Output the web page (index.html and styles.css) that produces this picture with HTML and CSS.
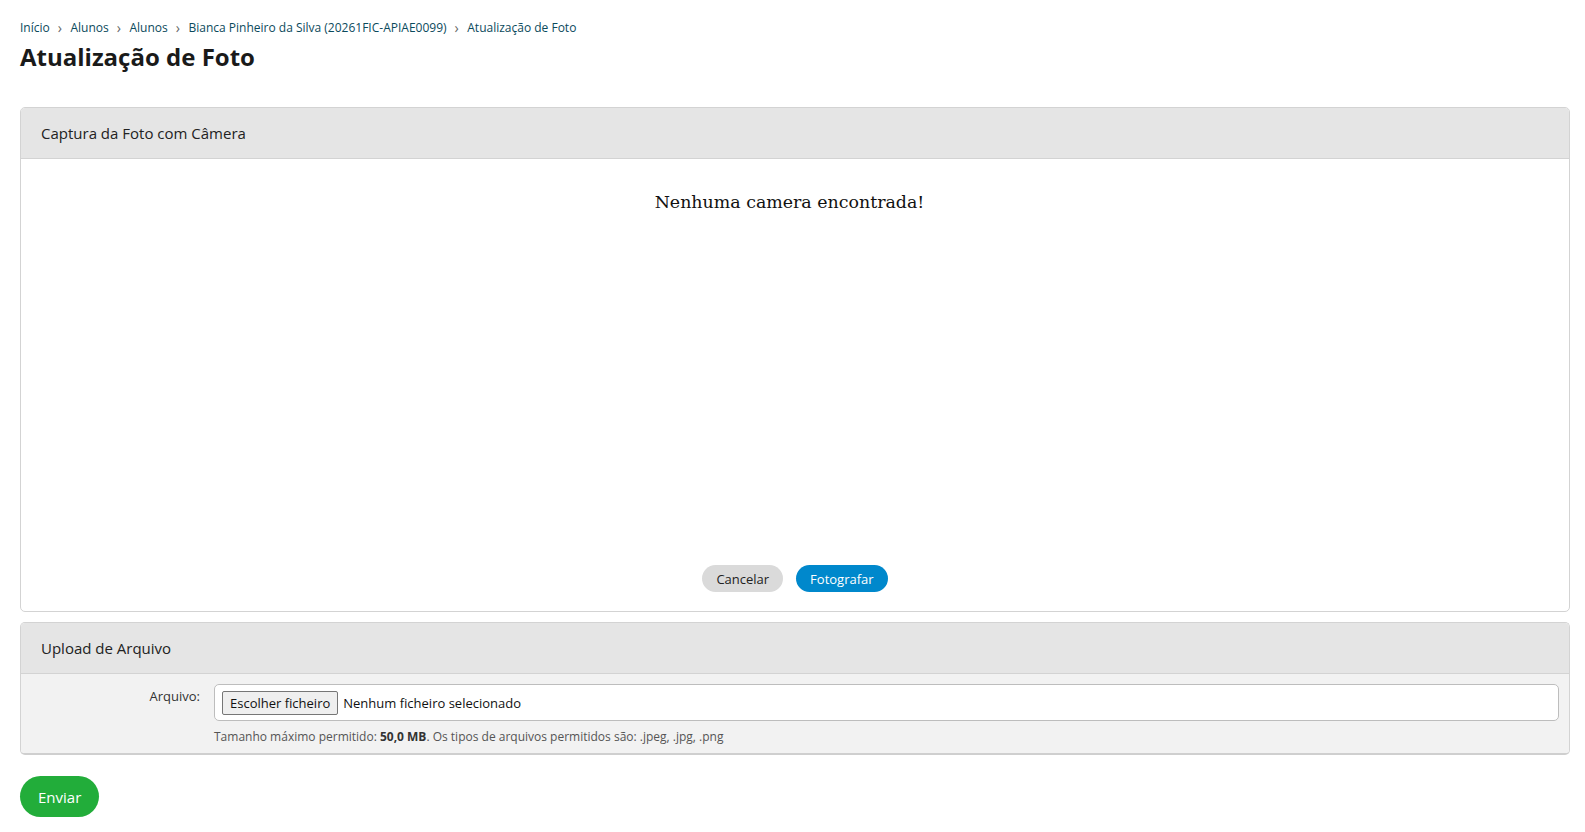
FILE: index.html
```html
<!DOCTYPE html>
<html lang="pt">
<head>
  <meta charset="UTF-8" />
  <title>Atualização de Foto</title>
  <link rel="stylesheet" href="styles.css">
</head>
<body>
  <div class="page">
    <nav class="breadcrumb">
      <a href="#">Início</a><span class="sep">&#8250;</span>
      <a href="#">Alunos</a><span class="sep">&#8250;</span>
      <a href="#">Alunos</a><span class="sep">&#8250;</span>
      <a href="#">Bianca Pinheiro da Silva (20261FIC-APIAE0099)</a><span class="sep">&#8250;</span>
      <span class="current">Atualização de Foto</span>
    </nav>
    <h1>Atualização de Foto</h1>

    <!-- Camera -->
    <div class="box">
      <div class="box-header">Captura da Foto com Câmera</div>
      <div class="box-body camera-body">
        <div class="no-camera">Nenhuma camera encontrada!</div>
        <div class="camera-actions">
          <button class="btn btn-grey">Cancelar</button>
          <button class="btn btn-blue">Fotografar</button>
        </div>
      </div>
    </div>

    <!-- Upload -->
    <div class="box box-upload">
      <div class="box-header">Upload de Arquivo</div>
      <div class="box-body upload-body">
        <div class="field-row">
          <label class="field-label">Arquivo:</label>
          <div class="field-input">
            <div class="file-box">
              <span class="file-btn">Escolher ficheiro</span>
              <span class="file-name">Nenhum ficheiro selecionado</span>
            </div>
            <p class="help-text">Tamanho máximo permitido: <strong>50,0 MB</strong>. Os tipos de arquivos permitidos são: .jpeg, .jpg, .png</p>
          </div>
        </div>
      </div>
    </div>

    <button class="btn-submit">Enviar</button>
  </div>
</body>
</html>
```

FILE: styles.css
```css
:root {
  --link-color: #0b4a5c;
  --text-dark: #1c1c1c;
  --border-color: #d3d3d3;
  --header-bg: #e5e5e5;
  --blue: #0088cc;
  --green: #22ad3a;
}

* {
  box-sizing: border-box;
  margin: 0;
  padding: 0;
}

body {
  font-family: 'Open Sans', sans-serif;
  color: var(--text-dark);
  background: #fff;
}

.page {
  padding: 19px 15px 0 20px;
}

.breadcrumb {
  display: flex;
  align-items: center;
  font-size: 12px;
  line-height: 18px;
  color: var(--link-color);
}

.breadcrumb a {
  color: var(--link-color);
  text-decoration: none;
}

.breadcrumb .sep {
  color: #666;
  font-size: 14px;
  margin: 0 8.5px 0 8px;
}

h1 {
  font-size: 24px;
  font-weight: 700;
  line-height: 34px;
  margin-top: 3px;
  margin-bottom: 33px;
  color: #1a1a1a;
}

.box {
  border: 1px solid var(--border-color);
  border-radius: 5px;
  overflow: hidden;
}

.box-header {
  background: var(--header-bg);
  border-bottom: 1px solid var(--border-color);
  height: 51px;
  padding: 0 20px;
  display: flex;
  align-items: center;
  font-size: 15px;
  color: #222;
}

.camera-body {
  height: 452px;
  display: flex;
  flex-direction: column;
  justify-content: space-between;
  align-items: center;
  padding: 29px 0 19px;
}

.no-camera {
  font-family: 'DejaVu Serif', 'Liberation Serif', serif;
  font-size: 17.4px;
  line-height: 28px;
  color: #111;
  margin-right: 11px;
}

.camera-actions {
  display: flex;
  gap: 13px;
}

.btn {
  border: none;
  border-radius: 14px;
  height: 27px;
  padding: 0 14px;
  font-family: 'Open Sans', sans-serif;
  font-size: 13px;
  cursor: pointer;
}

.btn-grey {
  background: #dadada;
  color: #222;
}

.btn-blue {
  background: var(--blue);
  color: #fff;
}

.box-upload {
  margin-top: 10px;
  border-bottom: 2px solid #cfcfcf;
}

.upload-body {
  background: #f2f2f2;
  padding: 10px 10px 8px;
}

.field-row {
  display: flex;
  gap: 14px;
}

.field-label {
  width: 169px;
  text-align: right;
  font-size: 13px;
  padding-top: 3px;
  color: #333;
}

.field-input {
  flex: 1;
}

.file-box {
  display: flex;
  align-items: center;
  background: #fff;
  border: 1px solid #bdbdbd;
  border-radius: 5px;
  height: 37px;
  padding: 0 7px;
  font-size: 13px;
}

.file-btn {
  background: #efefef;
  border: 1px solid #767676;
  border-radius: 2px;
  padding: 2px 7px;
  margin-right: 5px;
  color: #111;
}

.file-name {
  color: #111;
}

.help-text {
  font-size: 12px;
  line-height: 16px;
  margin-top: 8px;
  color: #555;
}

.help-text strong {
  color: #333;
}

.btn-submit {
  margin-top: 21px;
  background: var(--green);
  color: #fff;
  border: none;
  border-radius: 21px;
  height: 41px;
  padding: 0 18px;
  font-family: 'Open Sans', sans-serif;
  font-size: 15px;
  cursor: pointer;
}
```
